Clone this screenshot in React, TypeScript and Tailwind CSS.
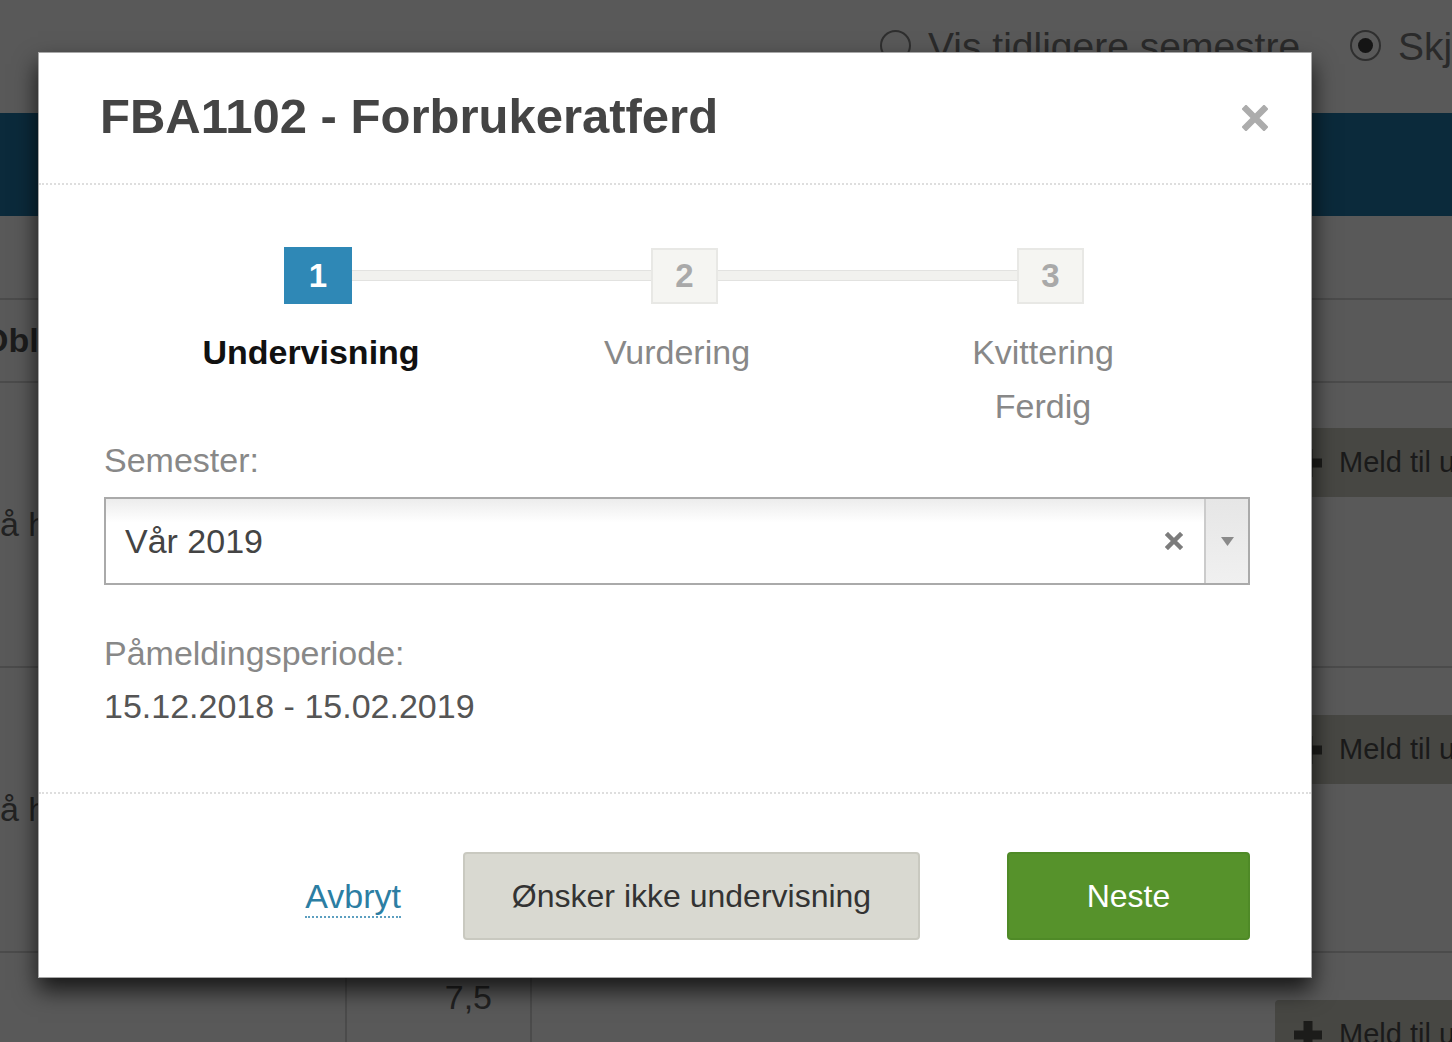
import React from "react";

const PlusIcon = () => (
  <svg width="32" height="32" viewBox="0 0 32 32" className="shrink-0">
    <rect x="11.5" y="2" width="9" height="28" fill="#1c1c1a" />
    <rect x="2" y="11.5" width="28" height="9" fill="#1c1c1a" />
  </svg>
);

const MeldButton = () => (
  <div className="h-[69px] w-[300px] shrink-0 bg-[#474743] rounded-[4px] pl-[17px] flex items-center gap-[15px] whitespace-nowrap">
    <PlusIcon />
    <span className="text-[29px] text-[#1a1a1a]">Meld til undervisning</span>
  </div>
);

const CloseIcon = () => (
  <svg width="26" height="26" viewBox="0 0 26 26">
    <path d="M4 4 L22 22 M22 4 L4 22" stroke="#acacac" strokeWidth="6.5" strokeLinecap="square" />
  </svg>
);

const SmallX = () => (
  <svg width="18" height="18" viewBox="0 0 18 18">
    <path d="M3 3 L15 15 M15 3 L3 15" stroke="#7c7c7c" strokeWidth="4.5" strokeLinecap="square" />
  </svg>
);

const Caret = () => (
  <svg width="13" height="9" viewBox="0 0 13 9">
    <path d="M0 0 H13 L6.5 9 Z" fill="#8a8a8a" />
  </svg>
);

function Background() {
  return (
    <div className="flex flex-col">
      {/* top radios */}
      <div className="h-[113px] flex items-start pt-[27px] pl-[880px] whitespace-nowrap text-[39px] leading-none text-[#2a2a2a]">
        <span className="mt-[3px] w-[31px] h-[31px] rounded-full border-2 border-[#2f2f2f] shrink-0" />
        <span className="ml-[17px] shrink-0">Vis tidligere semestre</span>
        <span className="ml-[50px] mt-[3px] w-[31px] h-[31px] rounded-full border-2 border-[#2f2f2f] shrink-0 flex items-center justify-center">
          <span className="w-[15px] h-[15px] rounded-full bg-[#151515]" />
        </span>
        <span className="ml-[17px] shrink-0">Skjul tidligere semestre</span>
      </div>
      {/* navy band */}
      <div className="h-[103px] bg-[#0b2a3b]" />
      {/* header row */}
      <div className="h-[84px] border-b-2 border-[#4b4b4b]" />
      <div className="h-[83px] border-b-2 border-[#4b4b4b] flex items-center">
        <span className="-ml-[18px] text-[34px] font-bold text-[#1c1c1c] whitespace-nowrap">Obligatorisk</span>
      </div>
      {/* row C */}
      <div className="h-[285px] border-b-2 border-[#4b4b4b] flex">
        <div className="w-[1275px] shrink-0 flex items-center">
          <span className="-ml-[19px] text-[34px] text-[#222] whitespace-nowrap">på høsten</span>
        </div>
        <div className="pt-[45px] shrink-0">
          <MeldButton />
        </div>
      </div>
      {/* row D */}
      <div className="h-[285px] border-b-2 border-[#4b4b4b] flex">
        <div className="w-[1275px] shrink-0 flex items-center">
          <span className="-ml-[19px] text-[34px] text-[#222] whitespace-nowrap">på høsten</span>
        </div>
        <div className="pt-[47px] shrink-0">
          <MeldButton />
        </div>
      </div>
      {/* row E */}
      <div className="h-[120px] flex">
        <div className="w-[347px] shrink-0 border-r-2 border-[#4b4b4b]" />
        <div className="w-[185px] shrink-0 border-r-2 border-[#4b4b4b] flex justify-end pr-[38px] pt-[27px]">
          <span className="text-[34px] leading-none text-[#222]">7,5</span>
        </div>
        <div className="w-[743px] shrink-0" />
        <div className="pt-[47px] shrink-0">
          <MeldButton />
        </div>
      </div>
    </div>
  );
}

function Modal() {
  return (
    <div className="absolute left-[38px] top-[52px] w-[1274px] h-[926px] bg-white border border-[#a8a8a8] shadow-[0_12px_22px_rgba(0,0,0,0.75)] flex flex-col">
      {/* header */}
      <div className="h-[132px] shrink-0 pl-[61px] pr-[43px] flex items-center justify-between border-b-2 border-dotted border-[#dedede]">
        <h4 className="text-[49px] font-bold leading-none text-[#444] -mt-[3px]">FBA1102 - Forbrukeratferd</h4>
        <CloseIcon />
      </div>
      {/* body */}
      <div className="flex-1 pl-[65px] pr-[61px] flex flex-col">
        <div className="mt-[62px] ml-[180px] flex items-center">
          <div className="w-[68px] h-[57px] bg-[#2f88b6] flex items-center justify-center text-white text-[33px] font-bold leading-none">1</div>
          <div className="w-[299px] h-[11px] bg-[#f1f1ee] border-y border-[#e2e2e0]" />
          <div className="w-[67px] h-[56px] bg-[#f5f5f2] border-2 border-[#e8e8e5] flex items-center justify-center text-[#a9a9a9] text-[33px] font-bold leading-none">2</div>
          <div className="w-[299px] h-[11px] bg-[#f1f1ee] border-y border-[#e2e2e0]" />
          <div className="w-[67px] h-[56px] bg-[#f5f5f2] border-2 border-[#e8e8e5] flex items-center justify-center text-[#a9a9a9] text-[33px] font-bold leading-none">3</div>
        </div>
        <div className="mt-[21px] ml-[24px] w-[1098px] grid grid-cols-3 text-[34px] leading-[54px] text-center">
          <div className="font-bold text-[#111]">Undervisning</div>
          <div className="text-[#888]">Vurdering</div>
          <div className="text-[#888]">
            <div>Kvittering</div>
            <div>Ferdig</div>
          </div>
        </div>
        <div className="text-[34px] leading-[54px] text-[#888]">Semester:</div>
        <div className="mt-[10px] h-[88px] border-2 border-[#aaaaaa] flex bg-[linear-gradient(to_bottom,#ececec_0%,#ffffff_28%,#ffffff_100%)]">
          <div className="flex-1 flex items-center pl-[19px] text-[34px] text-[#444]">Vår 2019</div>
          <div className="flex items-center mr-[21px]">
            <SmallX />
          </div>
          <div className="w-[44px] border-l-2 border-[#cbcbcb] bg-[linear-gradient(to_bottom,#e6e6e6,#f0f0f0)] flex items-center justify-center">
            <Caret />
          </div>
        </div>
        <div className="mt-[41px] text-[34px] leading-[54px] text-[#888]">Påmeldingsperiode:</div>
        <div className="text-[34px] leading-[53px] text-[#555]">15.12.2018 - 15.02.2019</div>
      </div>
      {/* footer */}
      <div className="h-[185px] shrink-0 border-t-2 border-dotted border-[#dedede] pt-[58px] pr-[61px] flex justify-end items-start">
        <a className="mt-[24px] mr-[62px] text-[34px] leading-[40px] text-[#2c7ea3] border-b-2 border-dotted border-[#5c9fc0]">Avbryt</a>
        <button className="w-[457px] h-[88px] rounded-[4px] bg-[#d9d9d1] border-2 border-[#c9c9c0] text-[32px] text-[#333]">Ønsker ikke undervisning</button>
        <button className="ml-[87px] w-[243px] h-[88px] rounded-[4px] bg-[#56922b] border-2 border-[#4f8a27] text-[32px] text-white">Neste</button>
      </div>
    </div>
  );
}

export default function App() {
  return (
    <div className="relative w-[1452px] h-[1042px] overflow-hidden bg-[#595959] font-['Liberation_Sans',Arial,sans-serif]">
      <Background />
      <Modal />
    </div>
  );
}
